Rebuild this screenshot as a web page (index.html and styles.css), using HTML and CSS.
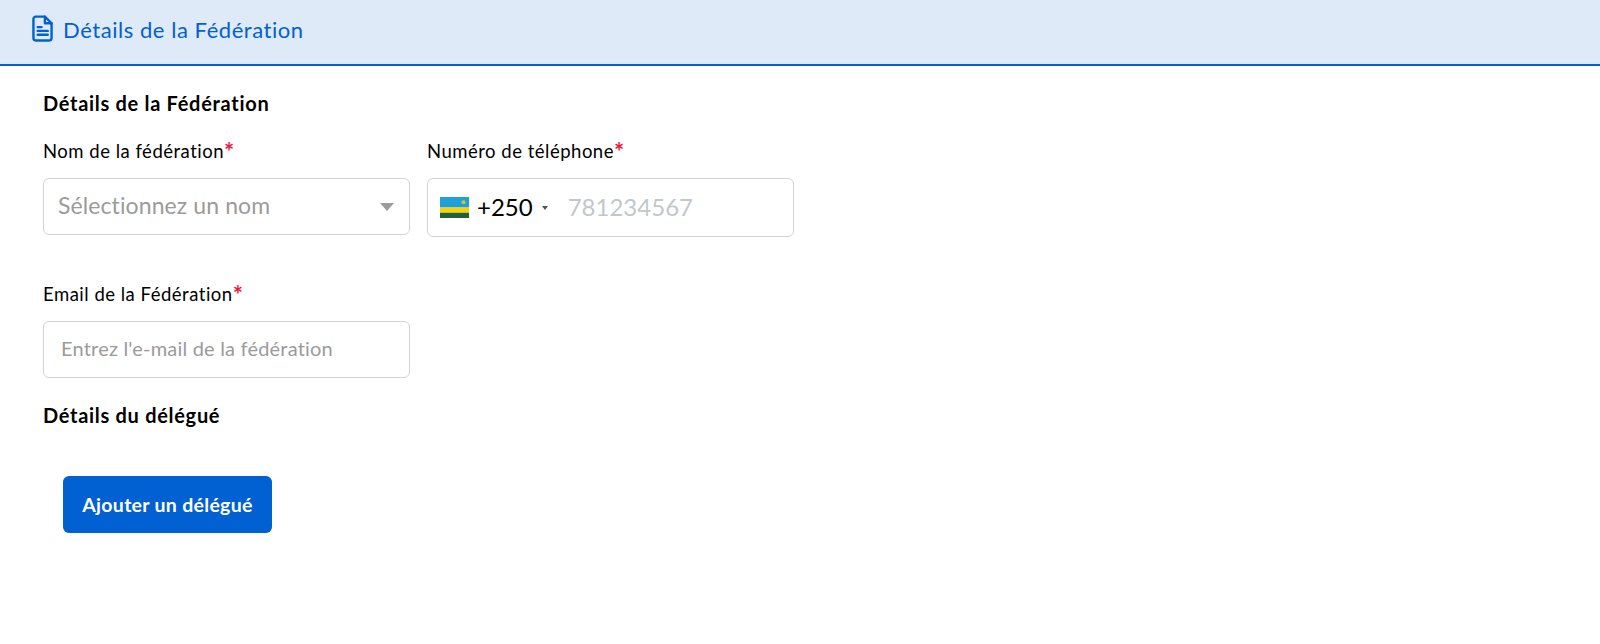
FILE: index.html
```html
<!DOCTYPE html>
<html lang="fr">
<head>
<meta charset="utf-8">
<title>Détails de la Fédération</title>
<link rel="stylesheet" href="styles.css">
</head>
<body>
<header class="bar">
  <svg class="bar-icon" viewBox="0 0 22 28" width="21" height="27" fill="none" stroke="#0160d2" stroke-width="2.5" stroke-linejoin="round" stroke-linecap="round">
    <path d="M4 1.5H13.5L20.5 8.5V24A2.5 2.5 0 0 1 18 26.5H4A2.5 2.5 0 0 1 1.5 24V4A2.5 2.5 0 0 1 4 1.5Z"/>
    <path d="M13.5 1.5V8.5H20.5"/>
    <path d="M6 12.5H10M6 16.5H16.5M6 20.5H16.5"/>
  </svg>
  <span class="bar-title">Détails de la Fédération</span>
</header>
<main class="content">
  <h2 class="section first">Détails de la Fédération</h2>
  <div class="row">
    <div class="field">
      <label class="label">Nom de la fédération<span class="req">*</span></label>
      <div class="box select">
        <span class="select-text">Sélectionnez un nom</span>
        <span class="arrow"></span>
      </div>
    </div>
    <div class="field">
      <label class="label">Numéro de téléphone<span class="req">*</span></label>
      <div class="box phone">
        <svg class="flag" viewBox="0 0 29 21" width="29" height="21">
          <rect width="29" height="10.5" fill="#20a0da"/>
          <rect y="10.5" width="29" height="5.25" fill="#fad201"/>
          <rect y="15.75" width="29" height="5.25" fill="#20603d"/>
          <circle cx="23.5" cy="5.2" r="2" fill="#c9c832"/>
        </svg>
        <span class="dial">+250</span>
        <span class="mini-arrow"></span>
        <span class="phone-ph">781234567</span>
      </div>
    </div>
  </div>
  <div class="field email">
    <label class="label">Email de la Fédération<span class="req">*</span></label>
    <div class="box input"><span class="input-ph">Entrez l'e-mail de la fédération</span></div>
  </div>
  <h2 class="section">Détails du délégué</h2>
  <button class="btn" type="button">Ajouter un délégué</button>
</main>
</body>
</html>
```
FILE: styles.css
```css
* { box-sizing: border-box; }
html, body { margin: 0; padding: 0; background: #fff; }
body {
  font-family: Lato, "Noto Sans", sans-serif;
  color: #000;
  height: 644px;
  overflow: hidden;
}
.bar {
  height: 66px;
  background: #dfeaf8;
  border-bottom: 2.5px solid #0160d2;
  display: flex;
  align-items: center;
  padding-left: 32px;
  padding-bottom: 6px;
  gap: 10px;
}
.bar-icon { flex: none; margin-bottom: 2px; }
.bar-title { font-size: 22px; color: #0160d2; letter-spacing: 0.55px; }
.content { padding: 0 0 0 43px; }
.section { margin: 0; font-size: 20px; line-height: 24px; font-weight: 700; letter-spacing: 0.7px; }
.first { padding-top: 25px; }
.row { display: flex; align-items: flex-start; gap: 17px; margin-top: 24px; }
.field { width: 367px; }
.label { display: block; font-size: 18.5px; line-height: 24px; letter-spacing: 0.5px; }
.req { color: #f5133f; font-size: 24px; font-weight: 700; line-height: 0; letter-spacing: 0; vertical-align: -3px; }
.box {
  margin-top: 15px;
  background: #fff;
  border: 1.5px solid #cfd4da;
  border-radius: 6px;
  display: flex;
  align-items: center;
}
.select { height: 57px; padding: 0 15px 0 14px; justify-content: space-between; }
.select-text { font-size: 23px; color: #9b9b9b; letter-spacing: 0.1px; padding-bottom: 4px; }
.arrow {
  width: 0; height: 0;
  border-left: 7.5px solid transparent;
  border-right: 7.5px solid transparent;
  border-top: 8px solid #9b9b9b;
}
.phone { height: 59px; padding-left: 12px; }
.flag { flex: none; }
.dial { font-size: 24px; margin-left: 8px; line-height: 1; padding-bottom: 2px; }
.mini-arrow {
  width: 0; height: 0; margin-left: 9px;
  border-left: 3.5px solid transparent;
  border-right: 3.5px solid transparent;
  border-top: 4px solid #555;
}
.phone-ph { font-size: 24px; color: #c1c7cd; margin-left: 20px; line-height: 1; padding-bottom: 2px; }
.email { margin-top: 45px; }
.input { height: 57px; padding: 0 18px 0 17px; }
.input-ph { font-size: 20px; color: #9b9b9b; letter-spacing: 0.2px; padding-bottom: 4px; }
.email + .section { margin-top: 25px; }
.btn {
  display: block;
  margin: 49px 0 0 20px;
  width: 209px;
  height: 57px;
  border: 0;
  border-radius: 6px;
  background: #0160d2;
  color: #fff;
  font: 700 19.5px Lato, "Noto Sans", sans-serif;
  letter-spacing: 0.3px;
}
```
